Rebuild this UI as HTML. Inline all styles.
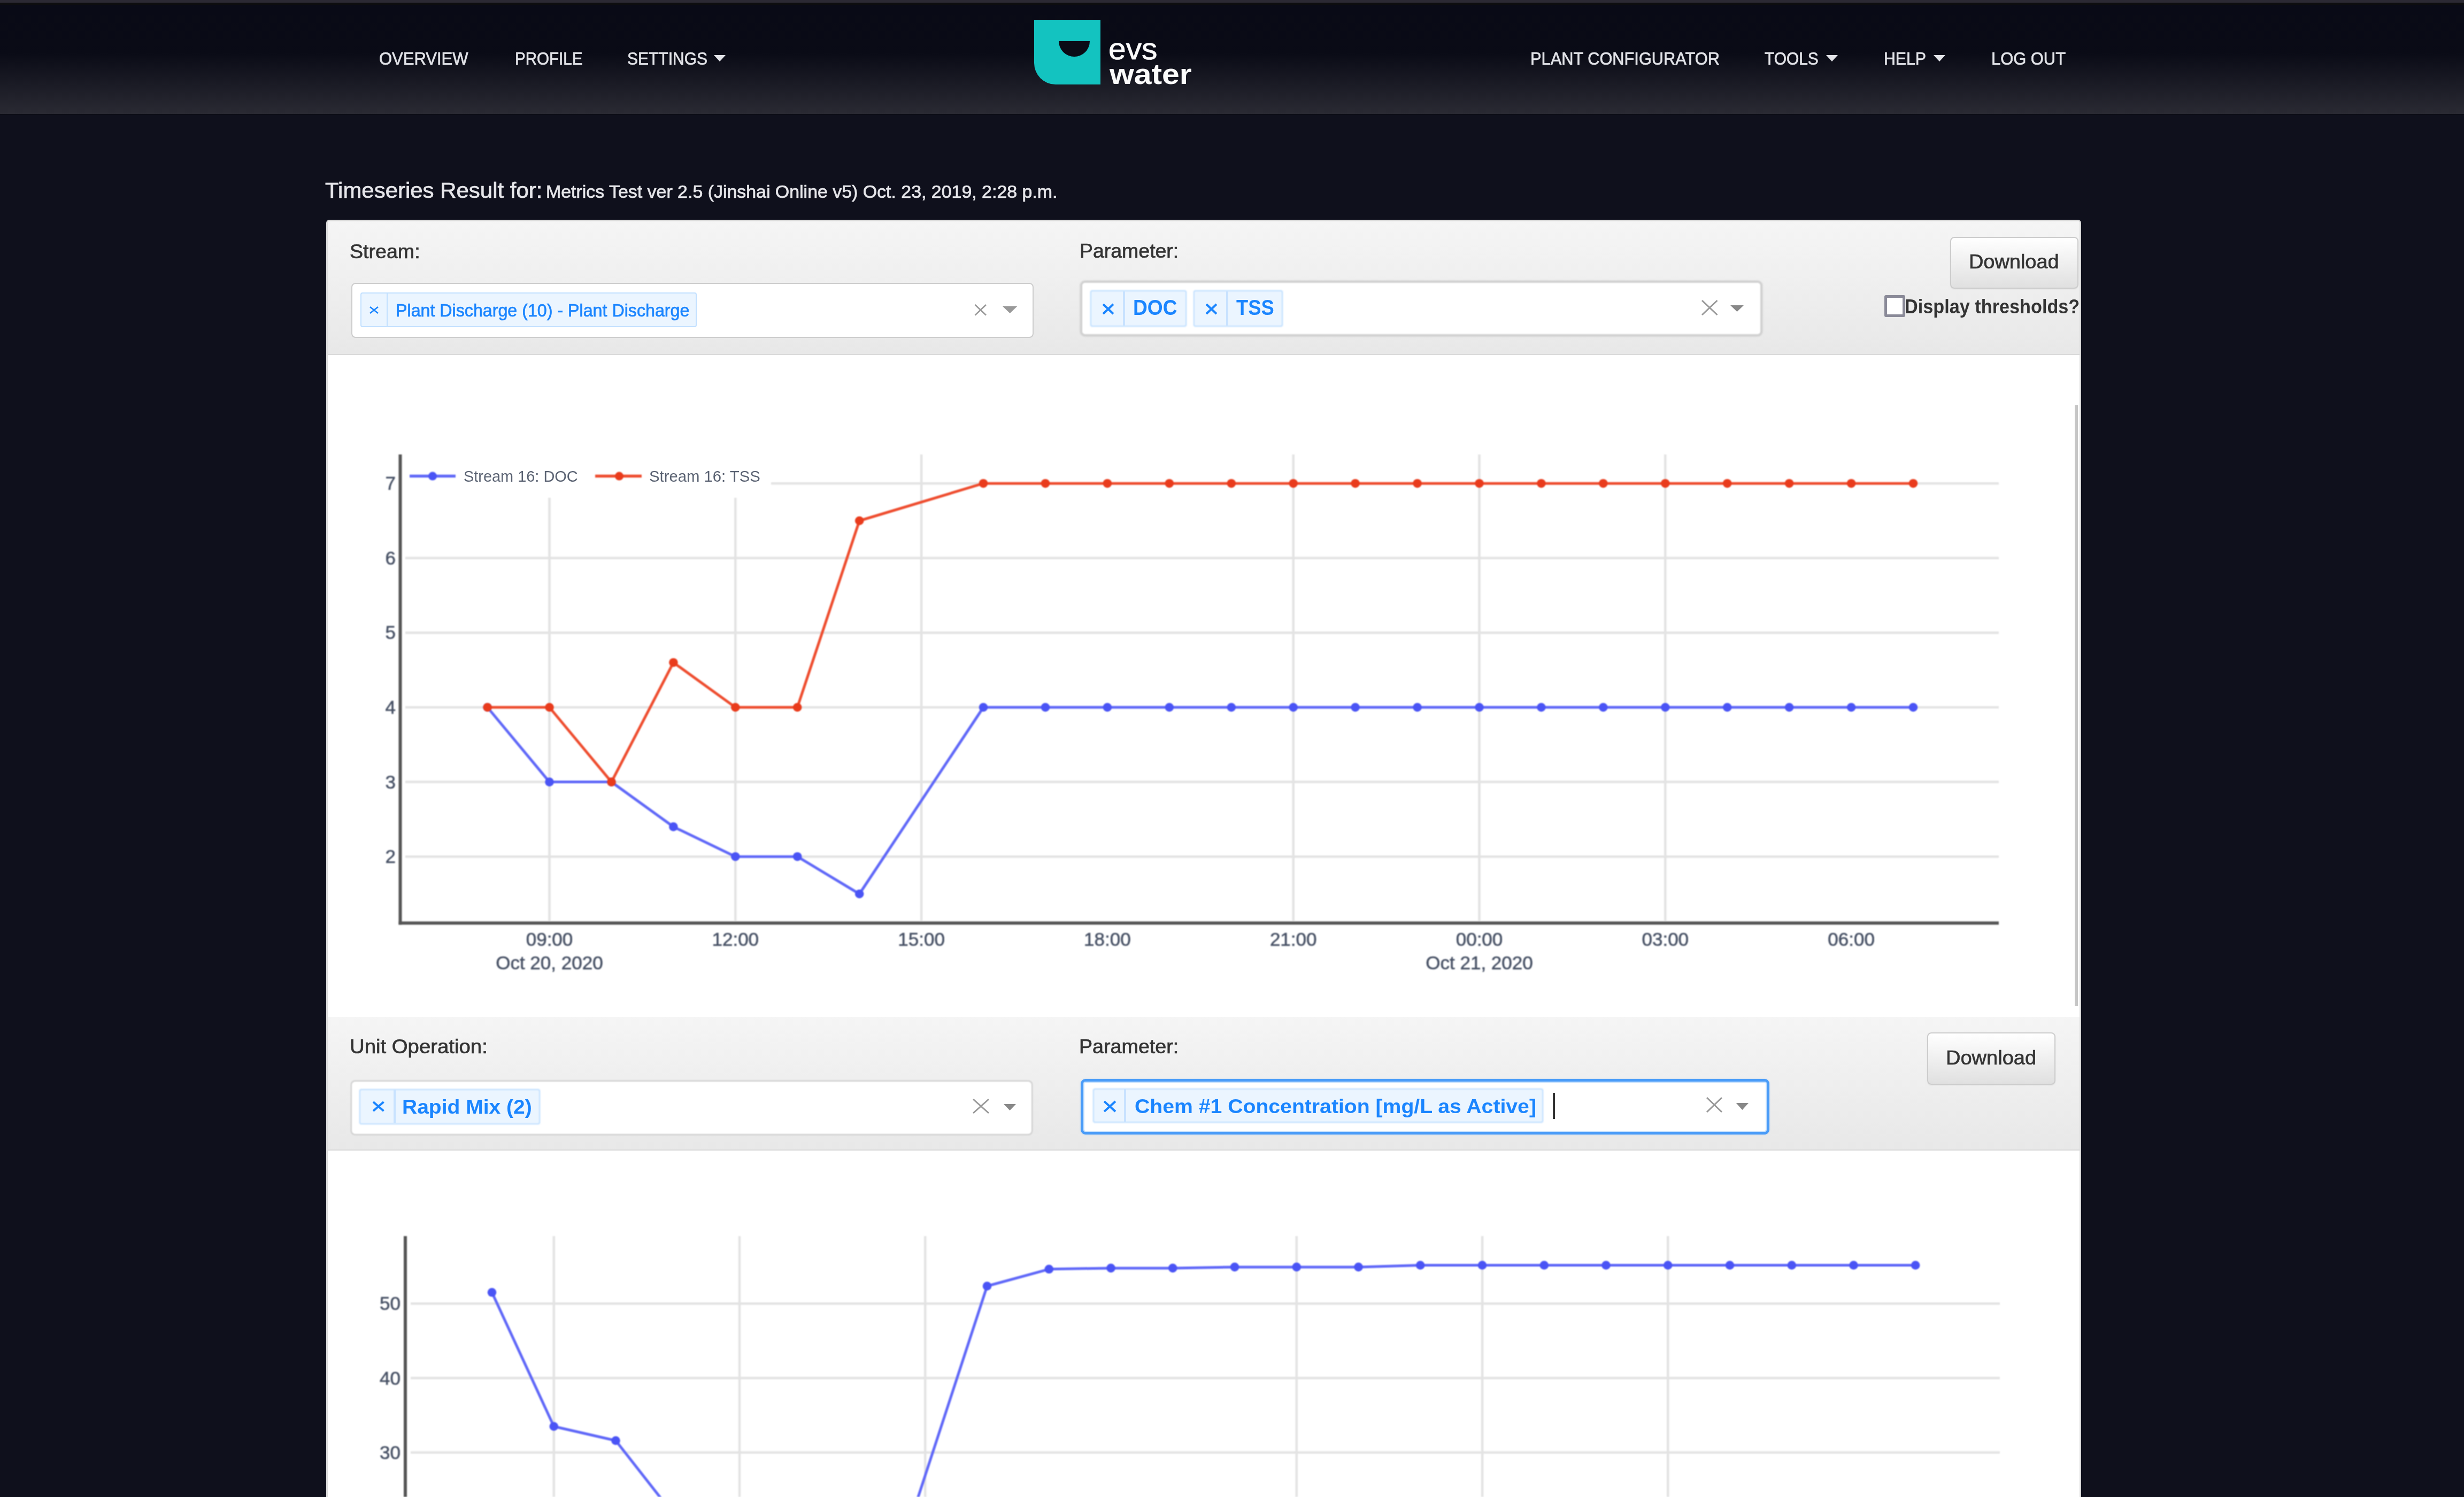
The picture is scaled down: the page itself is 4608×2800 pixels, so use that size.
<!DOCTYPE html>
<html><head><meta charset="utf-8"><title>Timeseries Result</title>
<style>
html,body{margin:0;padding:0;width:4608px;height:2800px;overflow:hidden;background:#0f101c;font-family:"Liberation Sans",sans-serif;}
.a{position:absolute;box-sizing:border-box;}
.t{position:absolute;white-space:nowrap;line-height:1;transform-origin:0 0;}
svg{position:absolute;left:0;top:0;}
</style></head><body>
<!-- top window band -->
<div class="a" style="left:0;top:0;width:4608px;height:5px;background:#2b2933"></div>
<div class="a" style="left:0;top:5px;width:4608px;height:4px;background:#0d0d0f"></div>
<!-- navbar -->
<div class="a" style="left:0;top:9px;width:4608px;height:204px;background:linear-gradient(to bottom,#090a16 0px,#0a0b16 90px,#2a2a33 204px)"></div>
<div class="a" style="left:0;top:213px;width:4608px;height:2px;background:#0b0c16"></div>
<!-- carets -->
<div class="a" style="left:1335px;top:103px;width:0;height:0;border-left:11.5px solid transparent;border-right:11.5px solid transparent;border-top:12px solid #e2e3e8"></div>
<div class="a" style="left:3415px;top:103px;width:0;height:0;border-left:11px solid transparent;border-right:11px solid transparent;border-top:12px solid #e2e3e8"></div>
<div class="a" style="left:3616px;top:103px;width:0;height:0;border-left:11px solid transparent;border-right:11px solid transparent;border-top:12px solid #e2e3e8"></div>
<!-- logo -->
<div class="a" style="left:1934px;top:37px;width:124px;height:121px;background:#13c3c0;border-bottom-left-radius:40px"></div>
<div class="a" style="left:1980px;top:77px;width:58px;height:29px;background:#0a0b16;border-radius:0 0 29px 29px"></div>

<!-- panel -->
<div class="a" style="left:610px;top:411px;width:3282px;height:2500px;background:#fff;border:3px solid #dcdcdc;border-radius:6px"></div>
<div class="a" style="left:613px;top:414px;width:3276px;height:250px;background:linear-gradient(to bottom,#f5f5f5,#e8e8e8);border-bottom:2px solid #d9d9d9;border-radius:4px 4px 0 0"></div>
<div class="a" style="left:613px;top:1902px;width:3276px;height:250px;background:linear-gradient(to bottom,#f5f5f5,#e8e8e8);border-bottom:2px solid #d9d9d9"></div>
<!-- scrollbar thumb chart1 -->
<div class="a" style="left:3880px;top:758px;width:6px;height:1124px;background:#c6c6c6"></div>

<div class="a" style="left:656.5px;top:529.3px;width:1276.1px;height:103.1px;background:#fff;border:2.5px solid #cccccc;border-radius:8px"></div>
<div class="a" style="left:673.5px;top:546.8px;width:629.5px;height:65.7px;background:#ebf5ff;border:2.5px solid #c2e0ff;border-radius:4px"></div>
<div class="a" style="left:722.6px;top:548px;width:2.4px;height:63.0px;background:#c2e0ff"></div>
<div class="a" style="left:2019.7px;top:524.7px;width:1275.9px;height:103.9px;background:#fff;border:4px solid #d0d0d0;border-radius:9px;box-shadow:0 0 3px rgba(0,0,0,.12);filter:blur(0.8px)"></div>
<div class="a" style="left:2039px;top:543.4px;width:180.4px;height:67.4px;background:#ebf5ff;border:2.5px solid #c2e0ff;border-radius:4px;box-shadow:0 0 2px #c2e0ff;filter:blur(0.8px)"></div>
<div class="a" style="left:2100px;top:545px;width:4.0px;height:64.0px;background:#c8e2ff"></div>
<div class="a" style="left:2232.4px;top:543.4px;width:166.4px;height:67.4px;background:#ebf5ff;border:2.5px solid #c2e0ff;border-radius:4px;box-shadow:0 0 2px #c2e0ff;filter:blur(0.8px)"></div>
<div class="a" style="left:2293px;top:545px;width:4.0px;height:64.0px;background:#c8e2ff"></div>
<div class="a" style="left:3647px;top:443px;width:240.0px;height:97.0px;background:linear-gradient(to bottom,#ffffff,#e0e0e0);border:2px solid #cccccc;border-radius:8px;box-shadow:0 1px 2px rgba(0,0,0,.08)"></div>
<div class="a" style="left:3523.5px;top:552px;width:39.0px;height:40.8px;background:#fff;border:5px solid #8a8a98;border-radius:3px"></div>
<div class="a" style="left:656.2px;top:2021.1px;width:1275.3px;height:102.3px;background:#fff;border:2.5px solid #cccccc;border-radius:8px;box-shadow:0 0 2px rgba(0,0,0,.12);filter:blur(0.8px)"></div>
<div class="a" style="left:671.7px;top:2036.5px;width:338.3px;height:66.5px;background:#ebf5ff;border:2.5px solid #c2e0ff;border-radius:4px;box-shadow:0 0 2px #c2e0ff;filter:blur(0.8px)"></div>
<div class="a" style="left:736px;top:2038px;width:4.0px;height:63.0px;background:#c8e2ff"></div>
<div class="a" style="left:2020.6px;top:2017.5px;width:1288.4px;height:104.8px;background:#fff;border:5.5px solid #4a9cf8;border-radius:9px;box-shadow:inset 0 0 0 2px #c4e0fd,0 0 3px rgba(0,126,255,.25)"></div>
<div class="a" style="left:2043.8px;top:2035.5px;width:842.7px;height:64.9px;background:#ebf5ff;border:2.5px solid #c2e0ff;border-radius:4px;box-shadow:0 0 2px #c2e0ff;filter:blur(0.8px)"></div>
<div class="a" style="left:2102px;top:2037px;width:4.0px;height:62.0px;background:#c8e2ff"></div>
<div class="a" style="left:2903.5px;top:2043.6px;width:4.0px;height:49.7px;background:#333"></div>
<div class="a" style="left:3604.2px;top:1931px;width:240.0px;height:97.5px;background:linear-gradient(to bottom,#ffffff,#e0e0e0);border:2px solid #cccccc;border-radius:8px;box-shadow:0 1px 2px rgba(0,0,0,.08)"></div>
<svg width="4608" height="2800" style="position:absolute;left:0;top:0"><path d="M692 574L707 586M707 574L692 586" stroke="#1a85ff" stroke-width="2.8" fill="none"/><path d="M1823.5 570L1844 589.5M1844 570L1823.5 589.5" stroke="#999" stroke-width="2.6" fill="none"/><path d="M1874.6 572.5L1902.7 572.5L1888.65 586Z" fill="#999"/><path d="M2063 569L2082 587M2082 569L2063 587" stroke="#1a85ff" stroke-width="4" fill="none"/><path d="M2256 569L2275 587M2275 569L2256 587" stroke="#1a85ff" stroke-width="4" fill="none"/><path d="M3183 562L3211.5 589M3211.5 562L3183 589" stroke="#999" stroke-width="3" fill="none"/><path d="M3236 571L3261 571L3248.5 583Z" fill="#888"/><path d="M698 2061L717.5 2078M717.5 2061L698 2078" stroke="#1a85ff" stroke-width="4" fill="none"/><path d="M1820 2056L1849 2082M1849 2056L1820 2082" stroke="#999" stroke-width="3" fill="none"/><path d="M1877 2065L1900 2065L1888.5 2077Z" fill="#888"/><path d="M2065 2060L2086 2079M2086 2060L2065 2079" stroke="#1a85ff" stroke-width="4" fill="none"/><path d="M3192 2053L3220 2080M3220 2053L3192 2080" stroke="#999" stroke-width="3" fill="none"/><path d="M3246.7 2063L3270 2063L3258.35 2076Z" fill="#888"/></svg>
<svg width="4608" height="2800" style="position:absolute;left:0;top:0;filter:blur(0.9px)"><line x1="758.0" y1="1602.2" x2="3738.0" y2="1602.2" stroke="#e3e3e3" stroke-width="4.5" /><line x1="758.0" y1="1462.6" x2="3738.0" y2="1462.6" stroke="#e3e3e3" stroke-width="4.5" /><line x1="758.0" y1="1323.0" x2="3738.0" y2="1323.0" stroke="#e3e3e3" stroke-width="4.5" /><line x1="758.0" y1="1183.4" x2="3738.0" y2="1183.4" stroke="#e3e3e3" stroke-width="4.5" /><line x1="758.0" y1="1043.8" x2="3738.0" y2="1043.8" stroke="#e3e3e3" stroke-width="4.5" /><line x1="758.0" y1="904.2" x2="3738.0" y2="904.2" stroke="#e3e3e3" stroke-width="4.5" /><line x1="1027.5" y1="850.0" x2="1027.5" y2="1722.0" stroke="#e3e3e3" stroke-width="4.5" /><line x1="1375.3" y1="850.0" x2="1375.3" y2="1722.0" stroke="#e3e3e3" stroke-width="4.5" /><line x1="1723.1" y1="850.0" x2="1723.1" y2="1722.0" stroke="#e3e3e3" stroke-width="4.5" /><line x1="2418.7" y1="850.0" x2="2418.7" y2="1722.0" stroke="#e3e3e3" stroke-width="4.5" /><line x1="2766.5" y1="850.0" x2="2766.5" y2="1722.0" stroke="#e3e3e3" stroke-width="4.5" /><line x1="3114.3" y1="850.0" x2="3114.3" y2="1722.0" stroke="#e3e3e3" stroke-width="4.5" /><rect x="752" y="850" width="690" height="81" fill="#fff"/><line x1="748.5" y1="850.0" x2="748.5" y2="1729.5" stroke="#555" stroke-width="6" /><line x1="745.5" y1="1726.5" x2="3738.0" y2="1726.5" stroke="#555" stroke-width="6" /><polyline points="911.6,1323.0 1027.5,1462.6 1143.5,1462.6 1259.4,1546.4 1375.3,1602.2 1491.2,1602.2 1607.2,1672.0 1839.0,1323.0 1955.0,1323.0 2070.9,1323.0 2186.8,1323.0 2302.8,1323.0 2418.7,1323.0 2534.6,1323.0 2650.6,1323.0 2766.5,1323.0 2882.4,1323.0 2998.3,1323.0 3114.3,1323.0 3230.2,1323.0 3346.1,1323.0 3462.1,1323.0 3578.0,1323.0" fill="none" stroke="#5f67f8" stroke-width="5" stroke-linejoin="round"/><circle cx="911.6" cy="1323.0" r="8.3" fill="#4a54f5"/><circle cx="1027.5" cy="1462.6" r="8.3" fill="#4a54f5"/><circle cx="1143.5" cy="1462.6" r="8.3" fill="#4a54f5"/><circle cx="1259.4" cy="1546.4" r="8.3" fill="#4a54f5"/><circle cx="1375.3" cy="1602.2" r="8.3" fill="#4a54f5"/><circle cx="1491.2" cy="1602.2" r="8.3" fill="#4a54f5"/><circle cx="1607.2" cy="1672.0" r="8.3" fill="#4a54f5"/><circle cx="1839.0" cy="1323.0" r="8.3" fill="#4a54f5"/><circle cx="1955.0" cy="1323.0" r="8.3" fill="#4a54f5"/><circle cx="2070.9" cy="1323.0" r="8.3" fill="#4a54f5"/><circle cx="2186.8" cy="1323.0" r="8.3" fill="#4a54f5"/><circle cx="2302.8" cy="1323.0" r="8.3" fill="#4a54f5"/><circle cx="2418.7" cy="1323.0" r="8.3" fill="#4a54f5"/><circle cx="2534.6" cy="1323.0" r="8.3" fill="#4a54f5"/><circle cx="2650.6" cy="1323.0" r="8.3" fill="#4a54f5"/><circle cx="2766.5" cy="1323.0" r="8.3" fill="#4a54f5"/><circle cx="2882.4" cy="1323.0" r="8.3" fill="#4a54f5"/><circle cx="2998.3" cy="1323.0" r="8.3" fill="#4a54f5"/><circle cx="3114.3" cy="1323.0" r="8.3" fill="#4a54f5"/><circle cx="3230.2" cy="1323.0" r="8.3" fill="#4a54f5"/><circle cx="3346.1" cy="1323.0" r="8.3" fill="#4a54f5"/><circle cx="3462.1" cy="1323.0" r="8.3" fill="#4a54f5"/><circle cx="3578.0" cy="1323.0" r="8.3" fill="#4a54f5"/><polyline points="911.6,1323.0 1027.5,1323.0 1143.5,1462.6 1259.4,1239.2 1375.3,1323.0 1491.2,1323.0 1607.2,974.0 1839.0,904.2 1955.0,904.2 2070.9,904.2 2186.8,904.2 2302.8,904.2 2418.7,904.2 2534.6,904.2 2650.6,904.2 2766.5,904.2 2882.4,904.2 2998.3,904.2 3114.3,904.2 3230.2,904.2 3346.1,904.2 3462.1,904.2 3578.0,904.2" fill="none" stroke="#ee4c2e" stroke-width="5" stroke-linejoin="round"/><circle cx="911.6" cy="1323.0" r="8.3" fill="#e93b1c"/><circle cx="1027.5" cy="1323.0" r="8.3" fill="#e93b1c"/><circle cx="1143.5" cy="1462.6" r="8.3" fill="#e93b1c"/><circle cx="1259.4" cy="1239.2" r="8.3" fill="#e93b1c"/><circle cx="1375.3" cy="1323.0" r="8.3" fill="#e93b1c"/><circle cx="1491.2" cy="1323.0" r="8.3" fill="#e93b1c"/><circle cx="1607.2" cy="974.0" r="8.3" fill="#e93b1c"/><circle cx="1839.0" cy="904.2" r="8.3" fill="#e93b1c"/><circle cx="1955.0" cy="904.2" r="8.3" fill="#e93b1c"/><circle cx="2070.9" cy="904.2" r="8.3" fill="#e93b1c"/><circle cx="2186.8" cy="904.2" r="8.3" fill="#e93b1c"/><circle cx="2302.8" cy="904.2" r="8.3" fill="#e93b1c"/><circle cx="2418.7" cy="904.2" r="8.3" fill="#e93b1c"/><circle cx="2534.6" cy="904.2" r="8.3" fill="#e93b1c"/><circle cx="2650.6" cy="904.2" r="8.3" fill="#e93b1c"/><circle cx="2766.5" cy="904.2" r="8.3" fill="#e93b1c"/><circle cx="2882.4" cy="904.2" r="8.3" fill="#e93b1c"/><circle cx="2998.3" cy="904.2" r="8.3" fill="#e93b1c"/><circle cx="3114.3" cy="904.2" r="8.3" fill="#e93b1c"/><circle cx="3230.2" cy="904.2" r="8.3" fill="#e93b1c"/><circle cx="3346.1" cy="904.2" r="8.3" fill="#e93b1c"/><circle cx="3462.1" cy="904.2" r="8.3" fill="#e93b1c"/><circle cx="3578.0" cy="904.2" r="8.3" fill="#e93b1c"/><line x1="766.0" y1="890.6" x2="852.0" y2="890.6" stroke="#5f67f8" stroke-width="5.5" /><circle cx="809" cy="890.6" r="8" fill="#4a54f5"/><line x1="1113.0" y1="890.6" x2="1200.0" y2="890.6" stroke="#ee4c2e" stroke-width="5.5" /><circle cx="1158" cy="890.6" r="8" fill="#e93b1c"/><text x="740.0" y="1614.2" font-family="Liberation Sans" font-size="35" fill="#465064" stroke="#465064" stroke-width="0.6" text-anchor="end">2</text><text x="740.0" y="1474.6" font-family="Liberation Sans" font-size="35" fill="#465064" stroke="#465064" stroke-width="0.6" text-anchor="end">3</text><text x="740.0" y="1335.0" font-family="Liberation Sans" font-size="35" fill="#465064" stroke="#465064" stroke-width="0.6" text-anchor="end">4</text><text x="740.0" y="1195.4" font-family="Liberation Sans" font-size="35" fill="#465064" stroke="#465064" stroke-width="0.6" text-anchor="end">5</text><text x="740.0" y="1055.8" font-family="Liberation Sans" font-size="35" fill="#465064" stroke="#465064" stroke-width="0.6" text-anchor="end">6</text><text x="740.0" y="916.2" font-family="Liberation Sans" font-size="35" fill="#465064" stroke="#465064" stroke-width="0.6" text-anchor="end">7</text><text x="1027.5" y="1768.5" font-family="Liberation Sans" font-size="35" fill="#465064" stroke="#465064" stroke-width="0.6" text-anchor="middle">09:00</text><text x="1375.3" y="1768.5" font-family="Liberation Sans" font-size="35" fill="#465064" stroke="#465064" stroke-width="0.6" text-anchor="middle">12:00</text><text x="1723.1" y="1768.5" font-family="Liberation Sans" font-size="35" fill="#465064" stroke="#465064" stroke-width="0.6" text-anchor="middle">15:00</text><text x="2070.9" y="1768.5" font-family="Liberation Sans" font-size="35" fill="#465064" stroke="#465064" stroke-width="0.6" text-anchor="middle">18:00</text><text x="2418.7" y="1768.5" font-family="Liberation Sans" font-size="35" fill="#465064" stroke="#465064" stroke-width="0.6" text-anchor="middle">21:00</text><text x="2766.5" y="1768.5" font-family="Liberation Sans" font-size="35" fill="#465064" stroke="#465064" stroke-width="0.6" text-anchor="middle">00:00</text><text x="3114.3" y="1768.5" font-family="Liberation Sans" font-size="35" fill="#465064" stroke="#465064" stroke-width="0.6" text-anchor="middle">03:00</text><text x="3462.1" y="1768.5" font-family="Liberation Sans" font-size="35" fill="#465064" stroke="#465064" stroke-width="0.6" text-anchor="middle">06:00</text><text x="1027.4" y="1812.5" font-family="Liberation Sans" font-size="35" fill="#465064" stroke="#465064" stroke-width="0.6" text-anchor="middle">Oct 20, 2020</text><text x="2766.5" y="1812.5" font-family="Liberation Sans" font-size="35" fill="#465064" stroke="#465064" stroke-width="0.6" text-anchor="middle">Oct 21, 2020</text><line x1="768.0" y1="2716.8" x2="3740.0" y2="2716.8" stroke="#e3e3e3" stroke-width="4.5" /><line x1="768.0" y1="2577.5" x2="3740.0" y2="2577.5" stroke="#e3e3e3" stroke-width="4.5" /><line x1="768.0" y1="2438.2" x2="3740.0" y2="2438.2" stroke="#e3e3e3" stroke-width="4.5" /><line x1="1035.8" y1="2312.0" x2="1035.8" y2="2800.0" stroke="#e3e3e3" stroke-width="4.5" /><line x1="1383.0" y1="2312.0" x2="1383.0" y2="2800.0" stroke="#e3e3e3" stroke-width="4.5" /><line x1="1730.3" y1="2312.0" x2="1730.3" y2="2800.0" stroke="#e3e3e3" stroke-width="4.5" /><line x1="2424.8" y1="2312.0" x2="2424.8" y2="2800.0" stroke="#e3e3e3" stroke-width="4.5" /><line x1="2772.1" y1="2312.0" x2="2772.1" y2="2800.0" stroke="#e3e3e3" stroke-width="4.5" /><line x1="3119.3" y1="2312.0" x2="3119.3" y2="2800.0" stroke="#e3e3e3" stroke-width="4.5" /><line x1="758.0" y1="2312.0" x2="758.0" y2="2800.0" stroke="#555" stroke-width="6" /><polyline points="920.0,2417.3 1035.8,2668.0 1151.5,2694.5 1267.2,2842.2 1383.0,2995.4 1498.8,3023.3 1614.5,3113.8 1846.0,2405.5 1961.8,2373.8 2077.5,2371.9 2193.2,2371.9 2309.0,2369.9 2424.8,2369.9 2540.5,2369.9 2656.2,2366.5 2772.0,2366.5 2887.8,2366.5 3003.5,2366.5 3119.2,2366.5 3235.0,2366.5 3350.8,2366.5 3466.5,2366.5 3582.2,2366.5" fill="none" stroke="#5f67f8" stroke-width="5" stroke-linejoin="round"/><circle cx="920.0" cy="2417.3" r="8.3" fill="#4a54f5"/><circle cx="1035.8" cy="2668.0" r="8.3" fill="#4a54f5"/><circle cx="1151.5" cy="2694.5" r="8.3" fill="#4a54f5"/><circle cx="1267.2" cy="2842.2" r="8.3" fill="#4a54f5"/><circle cx="1383.0" cy="2995.4" r="8.3" fill="#4a54f5"/><circle cx="1498.8" cy="3023.3" r="8.3" fill="#4a54f5"/><circle cx="1614.5" cy="3113.8" r="8.3" fill="#4a54f5"/><circle cx="1846.0" cy="2405.5" r="8.3" fill="#4a54f5"/><circle cx="1961.8" cy="2373.8" r="8.3" fill="#4a54f5"/><circle cx="2077.5" cy="2371.9" r="8.3" fill="#4a54f5"/><circle cx="2193.2" cy="2371.9" r="8.3" fill="#4a54f5"/><circle cx="2309.0" cy="2369.9" r="8.3" fill="#4a54f5"/><circle cx="2424.8" cy="2369.9" r="8.3" fill="#4a54f5"/><circle cx="2540.5" cy="2369.9" r="8.3" fill="#4a54f5"/><circle cx="2656.2" cy="2366.5" r="8.3" fill="#4a54f5"/><circle cx="2772.0" cy="2366.5" r="8.3" fill="#4a54f5"/><circle cx="2887.8" cy="2366.5" r="8.3" fill="#4a54f5"/><circle cx="3003.5" cy="2366.5" r="8.3" fill="#4a54f5"/><circle cx="3119.2" cy="2366.5" r="8.3" fill="#4a54f5"/><circle cx="3235.0" cy="2366.5" r="8.3" fill="#4a54f5"/><circle cx="3350.8" cy="2366.5" r="8.3" fill="#4a54f5"/><circle cx="3466.5" cy="2366.5" r="8.3" fill="#4a54f5"/><circle cx="3582.2" cy="2366.5" r="8.3" fill="#4a54f5"/><text x="749.0" y="2728.8" font-family="Liberation Sans" font-size="35" fill="#465064" stroke="#465064" stroke-width="0.6" text-anchor="end">30</text><text x="749.0" y="2589.5" font-family="Liberation Sans" font-size="35" fill="#465064" stroke="#465064" stroke-width="0.6" text-anchor="end">40</text><text x="749.0" y="2450.2" font-family="Liberation Sans" font-size="35" fill="#465064" stroke="#465064" stroke-width="0.6" text-anchor="end">50</text></svg>
<div class="t" style="left:709.4px;top:92.2px;font-size:34.06px;color:#e2e3e8;font-weight:400;transform:scaleX(0.9107);-webkit-text-stroke:0.7px currentColor;">OVERVIEW</div>
<div class="t" style="left:962.6px;top:92.2px;font-size:34.06px;color:#e2e3e8;font-weight:400;transform:scaleX(0.8681);-webkit-text-stroke:0.7px currentColor;">PROFILE</div>
<div class="t" style="left:1172.5px;top:92.2px;font-size:34.06px;color:#e2e3e8;font-weight:400;transform:scaleX(0.8809);-webkit-text-stroke:0.7px currentColor;">SETTINGS</div>
<div class="t" style="left:2861.5px;top:92.2px;font-size:34.06px;color:#e2e3e8;font-weight:400;transform:scaleX(0.9038);-webkit-text-stroke:0.7px currentColor;">PLANT CONFIGURATOR</div>
<div class="t" style="left:3300.4px;top:92.2px;font-size:34.06px;color:#e2e3e8;font-weight:400;transform:scaleX(0.8782);-webkit-text-stroke:0.7px currentColor;">TOOLS</div>
<div class="t" style="left:3522.6px;top:92.2px;font-size:34.06px;color:#e2e3e8;font-weight:400;transform:scaleX(0.8880);-webkit-text-stroke:0.7px currentColor;">HELP</div>
<div class="t" style="left:3723.5px;top:92.2px;font-size:34.06px;color:#e2e3e8;font-weight:400;transform:scaleX(0.9075);-webkit-text-stroke:0.7px currentColor;">LOG OUT</div>
<div class="t" style="left:2072.6px;top:64.0px;font-size:56.60px;color:#fbfbfb;font-weight:400;transform:scaleX(1.0385);-webkit-text-stroke:0.7px currentColor;">evs</div>
<div class="t" style="left:2075.0px;top:112.2px;font-size:53.96px;color:#fbfbfb;font-weight:700;transform:scaleX(1.0905);">water</div>
<div class="t" style="left:608.2px;top:335.8px;font-size:41.30px;color:#e6e6ea;font-weight:400;transform:scaleX(1.0159);-webkit-text-stroke:0.7px currentColor;">Timeseries Result for:</div>
<div class="t" style="left:1021.3px;top:342.0px;font-size:33.91px;color:#e6e6ea;font-weight:400;transform:scaleX(0.9997);-webkit-text-stroke:0.7px currentColor;">Metrics Test ver 2.5 (Jinshai Online v5) Oct. 23, 2019, 2:28 p.m.</div>
<div class="t" style="left:654.3px;top:451.5px;font-size:37.25px;color:#333333;font-weight:400;transform:scaleX(1.0092);-webkit-text-stroke:0.7px currentColor;">Stream:</div>
<div class="t" style="left:2018.5px;top:451.0px;font-size:37.25px;color:#333333;font-weight:400;transform:scaleX(1.0054);-webkit-text-stroke:0.7px currentColor;">Parameter:</div>
<div class="t" style="left:739.9px;top:564.3px;font-size:33.48px;color:#1a85ff;font-weight:400;transform:scaleX(0.9619);-webkit-text-stroke:0.7px currentColor;">Plant Discharge (10) - Plant Discharge</div>
<div class="t" style="left:2119.4px;top:554.9px;font-size:41.16px;color:#1a85ff;font-weight:700;transform:scaleX(0.9019);filter:blur(0.7px);">DOC</div>
<div class="t" style="left:2311.6px;top:554.9px;font-size:41.16px;color:#1a85ff;font-weight:700;transform:scaleX(0.8823);filter:blur(0.7px);">TSS</div>
<div class="t" style="left:3682.0px;top:472.1px;font-size:36.52px;color:#333333;font-weight:400;transform:scaleX(1.0379);-webkit-text-stroke:0.7px currentColor;">Download</div>
<div class="t" style="left:3561.6px;top:555.2px;font-size:37.68px;color:#333333;font-weight:700;transform:scaleX(0.9090);">Display thresholds?</div>
<div class="t" style="left:653.9px;top:1940.2px;font-size:36.67px;color:#333333;font-weight:400;transform:scaleX(1.0456);-webkit-text-stroke:0.7px currentColor;">Unit Operation:</div>
<div class="t" style="left:2018.0px;top:1940.3px;font-size:36.67px;color:#333333;font-weight:400;transform:scaleX(1.0270);-webkit-text-stroke:0.7px currentColor;">Parameter:</div>
<div class="t" style="left:751.7px;top:2052.7px;font-size:36.52px;color:#1a85ff;font-weight:700;transform:scaleX(1.0679);filter:blur(0.7px);">Rapid Mix (2)</div>
<div class="t" style="left:2121.8px;top:2050.7px;font-size:37.68px;color:#1a85ff;font-weight:700;transform:scaleX(1.0398);filter:blur(0.7px);">Chem #1 Concentration [mg/L as Active]</div>
<div class="t" style="left:3638.5px;top:1959.7px;font-size:37.25px;color:#333333;font-weight:400;transform:scaleX(1.0209);-webkit-text-stroke:0.7px currentColor;">Download</div>
<div class="t" style="left:866.6px;top:876.5px;font-size:28.99px;color:#5a6272;font-weight:400;transform:scaleX(0.9972);">Stream 16: DOC</div>
<div class="t" style="left:1213.5px;top:876.5px;font-size:28.99px;color:#5a6272;font-weight:400;transform:scaleX(1.0104);">Stream 16: TSS</div>
</body></html>
